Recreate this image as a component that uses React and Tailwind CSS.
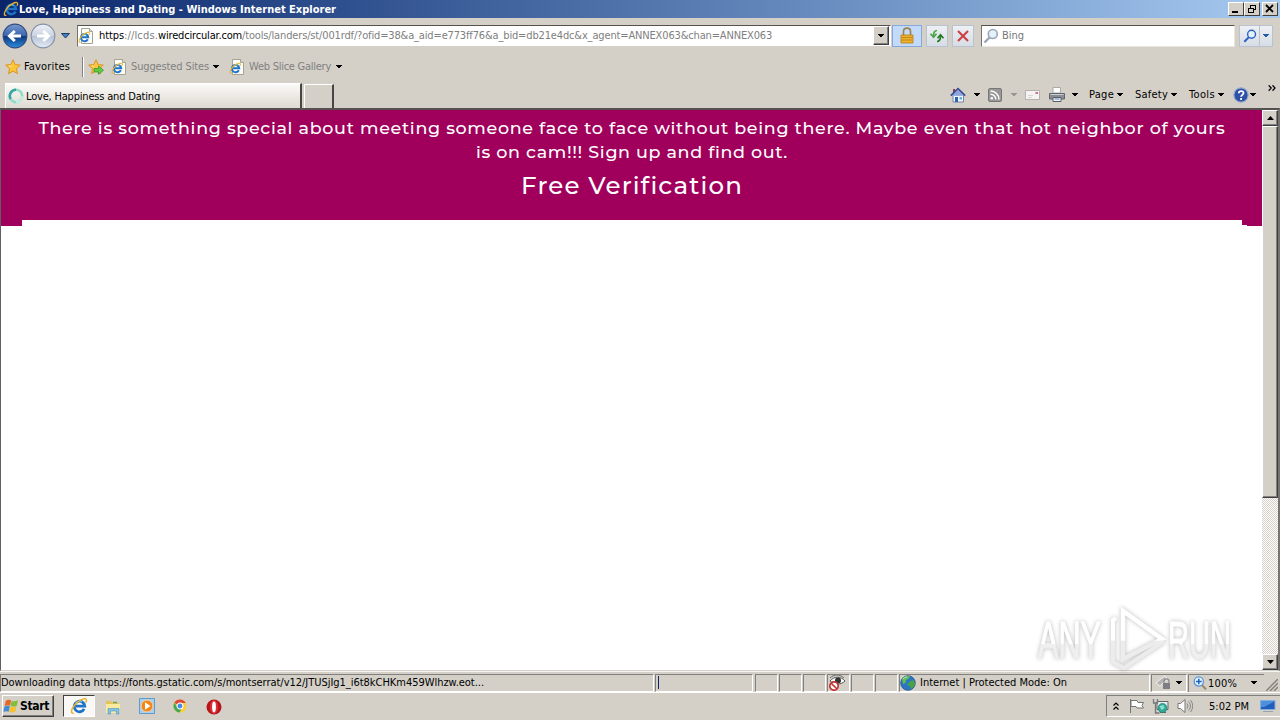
import React from 'react';

/**
 * Internet Explorer 8 window on a classic-theme Windows 7 desktop.
 */

// Spreads a label over a fixed width by adjusting the letter spacing.
function Fit({ width, className = '', children }) {
  const ref = React.useRef(null);
  React.useLayoutEffect(() => {
    const el = ref.current;
    el.style.letterSpacing = '0px';
    const natural = el.getBoundingClientRect().width;
    const count = el.textContent.length;
    el.style.letterSpacing = `${(width - natural) / count}px`;
  }, [width, children]);
  return <span ref={ref} className={`inline-block shrink-0 whitespace-nowrap ${className}`}>{children}</span>;
}

function Caret({ className = '' }) {
  return (
    <svg viewBox="0 0 6 4" className={`w-[6px] h-[4px] shrink-0 ${className}`} shapeRendering="crispEdges">
      <path d="M0 0h6L3 3.5z" fill="currentColor" />
    </svg>
  );
}

function IeGlyph() {
  return (
    <g fill="none">
      <path d="M12.6 10.6a4.7 4.7 0 1 1 .5-2.5H5.2" stroke="#1e72c8" strokeWidth="2.5" />
      <path d="M5 5.2a4.6 4.6 0 0 1 5.6-1" stroke="#7cc6f4" strokeWidth="1" />
      <path d="M3.400 14.300c-3 .8-2.600-2.600.2-6.500C6.600 3.700 12 .8 14 1.700c1.100.6.7 2-.2 3.200" stroke="#e8b42c" strokeWidth="1.300" />
    </g>
  );
}

function IeIcon({ className = 'size-4' }) {
  return <svg viewBox="0 0 16 16" className={`shrink-0 ${className}`}><IeGlyph /></svg>;
}

function IePage() {
  return (
    <svg viewBox="0 0 16 16" className="size-4 shrink-0">
      <path d="M3.500.5h8l3 3v12h-11z" fill="#fdfdf8" stroke="#a5a296" />
      <path d="M11.500.5v3h3" fill="#dcd9cc" stroke="#a5a296" />
      <g transform="translate(0 3) scale(.78)"><IeGlyph /></g>
    </svg>
  );
}

function Star({ add }) {
  return (
    <svg viewBox="0 0 16 16" className="size-4 shrink-0">
      <path d="M8 .8l2.100 4.800 5.200.5-3.900 3.500 1.100 5.100L8 12l-4.500 2.700 1.100-5.100L.7 6.100l5.200-.5z" fill="#fcc63c" stroke="#d98d1c" strokeWidth=".9" />
      <path d="M8 2.800L6.600 6.500 2.800 6.900l3 .8z" fill="#fff1a8" />
      {add && <path d="M6 9.500h4.500V7l5 4.200-5 4.200v-2.500H6z" fill="#62c943" stroke="#3b9a2c" strokeWidth=".8" />}
    </svg>
  );
}

function NavCircle({ forward }) {
  const arrow = forward ? 'M7 13h11M13.200 8l5.300 5-5.300 5' : 'M19 13H8M12.800 8l-5.300 5 5.300 5';
  return (
    <svg viewBox="0 0 26 26" className="size-[26px] shrink-0">
      <defs>
        <linearGradient id={forward ? 'fwd' : 'back'} x1="0" y1="0" x2="0" y2="1">
          <stop offset="0" stopColor={forward ? '#eef1f8' : '#7898d0'} />
          <stop offset=".48" stopColor={forward ? '#ccd4e2' : '#3a65ae'} />
          <stop offset=".52" stopColor={forward ? '#b7c3d7' : '#0d377f'} />
          <stop offset="1" stopColor={forward ? '#e5ebf5' : '#2b8fe0'} />
        </linearGradient>
      </defs>
      <circle cx="13" cy="13" r="11.800" fill={forward ? 'url(#fwd)' : 'url(#back)'} stroke={forward ? '#8590a8' : '#304b7c'} strokeWidth="1.200" />
      <path d={arrow} fill="none" stroke="#fff" strokeWidth="3" />
    </svg>
  );
}

function Magnifier({ color, className }) {
  return (
    <svg viewBox="0 0 16 16" className={`shrink-0 ${className}`}>
      <path d="M7 9l-5.500 5.500" stroke={color} strokeWidth="2.400" />
      <circle cx="9.800" cy="6" r="4.500" fill="#e4f1fb" stroke={color} strokeWidth="1.600" />
    </svg>
  );
}

function CaptionButton({ children, className = '' }) {
  return (
    <div className={`w-4 h-[14px] shrink-0 bg-[#d4d0c8] border border-t-white border-l-white border-r-[#404040] border-b-[#404040] ${className}`}>
      <svg viewBox="0 0 14 12" className="w-[14px] h-3" fill="none" stroke="#000" shapeRendering="crispEdges">{children}</svg>
    </div>
  );
}

function TitleBar() {
  return (
    <div className="h-[18px] shrink-0 flex items-center bg-linear-to-r from-[#0a246a] to-[#a6caf0] text-white">
      <IeIcon className="size-4 ml-[3px]" />
      <Fit width={317} className="font-bold pt-px">Love, Happiness and Dating - Windows Internet Explorer</Fit>
      <div className="flex ml-auto mr-[2px]">
        <CaptionButton><path d="M3 9h6" strokeWidth="2" /></CaptionButton>
        <CaptionButton>
          <path d="M5 2h6M5.500 2v3M10.500 2v5M9 6.500h2" />
          <path d="M3 5h6M3.500 5v5M8.500 5v5M3 9.500h6" />
        </CaptionButton>
        <CaptionButton className="ml-[2px]"><path d="M3 2l7 7M10 2L3 9" strokeWidth="1.800" shapeRendering="auto" /></CaptionButton>
      </div>
    </div>
  );
}

function ToolButton({ className, children }) {
  return (
    <div className={`h-[22px] shrink-0 flex items-center justify-center border border-[#bac2cf] bg-linear-to-b from-[#edf0f4] to-[#d7dde6] ${className}`}>
      {children}
    </div>
  );
}

function AddressRow() {
  return (
    <div className="h-[34px] pt-px flex items-center pl-[2px]">
      <NavCircle />
      <div className="ml-[2px]"><NavCircle forward /></div>
      <svg viewBox="0 0 9 6" className="w-[9px] h-[6px] ml-[5px]"><path d="M.5.5h8L4.500 5z" fill="#467fc0" stroke="#173c6c" /></svg>
      <div className="w-[814px] h-[22px] ml-[7px] flex items-center bg-white border border-t-[#55524e] border-l-[#77746e] border-r-white border-b-[#d4d0c8]">
        <div className="flex"><IePage /></div>
        <div className="flex ml-[5px] pt-px text-[#808080]">
          <Fit width={25} className="text-black">https</Fit>
          <Fit width={34}>://lcds.</Fit>
          <Fit width={84} className="text-black">wiredcircular.com</Fit>
          <Fit width={530}>/tools/landers/st/001rdf/?ofid=38&amp;a_aid=e773ff76&amp;a_bid=db21e4dc&amp;x_agent=ANNEX063&amp;chan=ANNEX063</Fit>
        </div>
        <div className="ml-auto mr-px w-4 h-[19px] flex items-center justify-center bg-[#d4d0c8] border border-t-white border-l-white border-r-[#404040] border-b-[#404040] shadow-[inset_-1px_-1px_#808080]">
          <Caret />
        </div>
      </div>
      <div className="w-[30px] h-[22px] ml-px flex items-center justify-center border border-[#84a9dd] bg-[#c4dafa]">
        <svg viewBox="0 0 16 18" className="w-4 h-[18px]">
          <path d="M4.500 8V4.500C4.500 0 11.500 0 11.500 4.500V8" fill="none" stroke="#9b8450" strokeWidth="1.700" />
          <path d="M2 8h12v8H2z" fill="#eeb02e" stroke="#b57b14" strokeWidth=".8" />
          <path d="M2.500 10.500h11M2.500 13h11" stroke="#c48818" />
        </svg>
      </div>
      <ToolButton className="w-[22px] ml-[4px]">
        <svg viewBox="0 0 16 14" className="w-4 h-[14px]" fill="none" strokeWidth="1.700">
          <path d="M8 1.500C5 1.500 4.500 4 4.500 7M1.500 4.800l3 3.400 3-3.400" stroke="#49a545" />
          <path d="M8 12.500c3 0 3.500-2.500 3.500-5.500M8.500 9.200l3-3.400 3 3.400" stroke="#247b25" />
        </svg>
      </ToolButton>
      <ToolButton className="w-[22px] ml-1">
        <svg viewBox="0 0 12 12" className="size-3"><path d="M1 1l10 10M11 1L1 11" stroke="#cc4545" strokeWidth="2.200" /></svg>
      </ToolButton>
      <div className="w-[254px] h-[22px] ml-[7px] flex items-center bg-white border border-t-[#55524e] border-l-[#77746e] border-r-[#e8e6e0] border-b-[#e8e6e0]">
        <Magnifier color="#9aa6b5" className="size-4 ml-px" />
        <Fit width={22} className="ml-[3px] pt-px text-[#777]">Bing</Fit>
      </div>
      <ToolButton className="w-[21px] ml-1"><Magnifier color="#2a62c4" className="size-[14px]" /></ToolButton>
      <ToolButton className="w-[14px] -ml-px text-[#245aa8]"><Caret /></ToolButton>
    </div>
  );
}

function FavoritesRow() {
  return (
    <div className="h-[29px] flex items-center pl-[5px]">
      <Star />
      <Fit width={46} className="ml-[3px]">Favorites</Fit>
      <div className="w-[2px] h-[20px] ml-3 bg-[#808080] border-r border-white" />
      <div className="ml-1 flex"><Star add /></div>
      <div className="ml-[7px] flex"><IePage /></div>
      <Fit width={78} className="ml-1 pt-px text-[#808080]">Suggested Sites</Fit>
      <Caret className="ml-1 mt-px" />
      <div className="ml-[10px] flex"><IePage /></div>
      <Fit width={82} className="ml-[4px] pt-px text-[#808080]">Web Slice Gallery</Fit>
      <Caret className="ml-[5px] mt-px" />
    </div>
  );
}

function TabRow() {
  return (
    <div className="h-[27px] flex items-end">
      <div className="w-[297px] h-[25px] ml-[5px] flex items-center bg-linear-to-b from-[#fbfaf8] to-[#dedad2] border-t border-l border-t-white border-l-white border-r-2 border-r-[#484642]">
        <svg viewBox="0 0 16 16" className="size-4 ml-[2px]" fill="none" strokeWidth="2.600">
          <circle cx="8" cy="8" r="6.200" stroke="#8edcc8" />
          <path d="M8 1.800A6.200 6.200 0 0 0 2.600 11" stroke="#3aa5a0" />
          <path d="M8 14.200A6.200 6.200 0 0 0 14 8" stroke="#c2ebe4" />
        </svg>
        <Fit width={134} className="ml-[2px] pt-px">Love, Happiness and Dating</Fit>
      </div>
      <div className="w-[30px] h-[24px] ml-[2px] border-t border-l border-t-white border-l-white border-r-2 border-r-[#484642] bg-[#d4d0c8]" />
      <div className="ml-[616px] h-[27px] flex items-center">
        <svg viewBox="0 0 16 16" className="size-4">
          <path d="M3 2h2v4H3z" fill="#963a4c" />
          <path d="M3 8h10.500v7H3z" fill="#f4f6fb" stroke="#7784ad" />
          <path d="M.8 8.600L8 1.500l7.200 7.100" fill="#8ea6dd" stroke="#344b91" strokeWidth="1.500" />
          <path d="M5 10h3v5H5z" fill="#2d64ad" /><path d="M9.500 10H12v2.500H9.500z" fill="#58b4dc" />
        </svg>
        <Caret className="ml-2" />
        <svg viewBox="0 0 14 14" className="size-[14px] ml-2">
          <rect x=".5" y=".5" width="13" height="13" rx="1.500" fill="#989898" stroke="#777" />
          <circle cx="3.800" cy="10.300" r="1.300" fill="#fff" />
          <path d="M2.500 6.200a5.200 5.200 0 0 1 5.300 5.300M2.500 3a8.500 8.500 0 0 1 8.500 8.500" fill="none" stroke="#fff" strokeWidth="1.500" />
        </svg>
        <Caret className="ml-[9px] text-[#989590]" />
        <svg viewBox="0 0 15 10" className="w-[15px] h-[10px] ml-2">
          <path d="M.5.5h14v9H.5z" fill="#f5f3f3" stroke="#b6b0b0" /><path d="M10.500 2H13v2h-2.500z" fill="#d0707e" /><path d="M3 5.500h5M3 7.500h4" stroke="#d8d3d6" />
        </svg>
        <svg viewBox="0 0 16 16" className="size-4 ml-[9px]">
          <path d="M4 .5h7.500V6H4z" fill="#fff" stroke="#aaa" />
          <path d="M.5 6.500h15V12H.5z" fill="#8a8e94" stroke="#62656b" />
          <path d="M1.500 7.500h13" stroke="#c9ccd1" />
          <path d="M4 10.500h8v4H4z" fill="#f0f6fb" stroke="#5a5e64" /><path d="M5.500 12h5" stroke="#4b86c4" />
        </svg>
        <Caret className="ml-[7px]" />
        <Fit width={25} className="ml-[11px]">Page</Fit><Caret className="ml-[3px]" />
        <Fit width={33} className="ml-3">Safety</Fit><Caret className="ml-[3px]" />
        <Fit width={26} className="ml-3">Tools</Fit><Caret className="ml-[3px]" />
        <svg viewBox="0 0 16 16" className="size-4 ml-[9px]">
          <circle cx="8" cy="8" r="7.200" fill="#2c51a6" stroke="#9caccf" strokeWidth="1.200" />
          <path d="M5.800 6.200C5.800 3.300 10.500 3.400 10.500 6c0 1.900-2.400 1.800-2.400 3.800M8.100 11v2" fill="none" stroke="#fff" strokeWidth="1.800" />
        </svg>
        <Caret className="ml-px" />
        <svg viewBox="0 0 8 6" className="w-2 h-[6px] ml-[12px] mb-[13px]" fill="none" stroke="#000" strokeWidth="1.300"><path d="M.7.3L3.200 3 .7 5.700M4.500.3L7 3 4.500 5.700" /></svg>
      </div>
    </div>
  );
}

function ScrollButton({ up }) {
  return (
    <div className="size-4 shrink-0 flex items-center justify-center bg-[#d4d0c8] border border-t-white border-l-white border-r-[#404040] border-b-[#404040] shadow-[inset_-1px_-1px_#808080]">
      <svg viewBox="0 0 7 4" className="w-[7px] h-1"><path d={up ? 'M0 4h7L3.500 0z' : 'M0 0h7L3.500 4z'} /></svg>
    </div>
  );
}

function Watermark() {
  return (
    <svg viewBox="0 0 212 68" className="absolute left-[1031px] top-[496px] w-[212px] h-[68px] drop-shadow-[0_0_2px_rgba(0,0,0,0.27)]">
      <defs>
        <linearGradient id="mark" x1="0" y1="0" x2="0" y2="1">
          <stop offset=".56" stopColor="#fff" />
          <stop offset=".58" stopColor="#efefef" />
        </linearGradient>
        <linearGradient id="play" gradientUnits="userSpaceOnUse" x1="0" y1="0" x2="0" y2="68">
          <stop offset=".5" stopColor="#fff" />
          <stop offset=".52" stopColor="#ececec" />
        </linearGradient>
      </defs>
      <g fill="url(#mark)" className="font-['Liberation_Sans'] text-[52px]">
        <text x="6" y="52" textLength="63" lengthAdjust="spacingAndGlyphs" stroke="url(#mark)" strokeWidth="1.200">ANY</text>
        <text x="136" y="52" textLength="63" lengthAdjust="spacingAndGlyphs" stroke="url(#mark)" strokeWidth="1.200">RUN</text>
      </g>
      <g fill="none" stroke="url(#play)" strokeWidth="4.500">
        <path d="M91 5v48l39-20z" />
        <path d="M84 12l-3 2v42l11 6 40-27" strokeWidth="4" />
      </g>
    </svg>
  );
}

function Page() {
  return (
    <div className="relative h-[563px] shrink-0 flex border-t-2 border-t-[#55504f] border-l border-l-[#606060] border-r-2 border-r-[#77736e] border-b border-b-[#d4d0c8] bg-white">
      <div className="w-[1261px] font-['Montserrat','Inter',sans-serif] text-white font-medium">
        <div className="h-[110px] pt-[6px] pl-px flex flex-col items-center bg-[#a0005c]">
          <Fit width={1187} className="text-[17.5px] leading-6">There is something special about meeting someone face to face without being there. Maybe even that hot neighbor of yours</Fit>
          <Fit width={312} className="text-[17.5px] leading-6">is on cam!!! Sign up and find out.</Fit>
          <Fit width={222} className="text-[24.5px] leading-[42px]">Free Verification</Fit>
        </div>
        <div className="h-[6px] flex justify-between">
          <div className="w-[21px] bg-[#a0005c]" />
          <div className="w-5 flex">
            <div className="w-[5px] h-[5px] bg-[#a0005c]" />
            <div className="grow bg-[#a0005c]" />
          </div>
        </div>
      </div>
      <div className="w-4 flex flex-col bg-[repeating-conic-gradient(#fff_0_25%,#d4d0c8_0_50%)] bg-size-[2px_2px]">
        <ScrollButton up />
        <div className="h-[372px] bg-[#d4d0c8] border border-t-white border-l-white border-r-[#404040] border-b-[#404040] shadow-[inset_-1px_-1px_#808080]" />
        <div className="mt-auto"><ScrollButton /></div>
      </div>
      <Watermark />
    </div>
  );
}

function Pane({ className, children }) {
  return (
    <div className={`h-[18px] shrink-0 flex items-center border border-t-[#808080] border-l-[#808080] border-r-white border-b-white ${className}`}>
      {children}
    </div>
  );
}

function StatusBar() {
  return (
    <div className="h-[22px] pt-px shrink-0 flex items-center border-t border-t-[#f6f4f0] border-b border-b-white">
      <Pane className="w-[654px]"><Fit width={483} className="pt-px">Downloading data https://fonts.gstatic.com/s/montserrat/v12/JTUSjIg1_i6t8kCHKm459Wlhzw.eot...</Fit></Pane>
      <Pane className="w-[98px] ml-px"><div className="w-px h-[13px] ml-[2px] bg-[#0a246a]" /></Pane>
      <Pane className="w-[23px] ml-[2px]" />
      <Pane className="w-[23px] ml-px" />
      <Pane className="w-[23px] ml-px" />
      <Pane className="w-[23px] ml-px">
        <svg viewBox="0 0 18 16" className="w-[18px] h-4 shrink-0">
          <path d="M2 6c4-5 11-5 15 0-4 4-10 4-15 0z" fill="#fff" stroke="#555" />
          <circle cx="10" cy="5.500" r="3" fill="#333" /><path d="M2 3c4-4 10-4 14 0" fill="none" stroke="#666" />
          <circle cx="6" cy="11" r="4.200" fill="#fff" stroke="#c43535" strokeWidth="1.700" /><path d="M3 8l6 6" stroke="#c43535" strokeWidth="1.700" />
        </svg>
      </Pane>
      <Pane className="w-[23px] ml-px" />
      <Pane className="w-[23px] ml-px" />
      <Pane className="w-[251px] ml-px">
        <svg viewBox="0 0 16 16" className="size-4">
          <circle cx="8" cy="8" r="7.300" fill="#2b75c5" stroke="#275387" strokeWidth=".8" />
          <path d="M2 4c2-3 6-3.500 8-2.500L8.500 4 6 5l-.5 3L3 9z" fill="#63bc55" /><path d="M9 7l4-2 2 3c0 3-2 5-4 6l-1-3-3-1z" fill="#48a443" />
          <path d="M3 4c1-1 2-2 4-2" stroke="#bde5f6" fill="none" />
        </svg>
        <Fit width={147} className="ml-1 pt-px">Internet | Protected Mode: On</Fit>
      </Pane>
      <Pane className="w-[36px] ml-px">
        <svg viewBox="0 0 17 15" className="w-[17px] h-[15px] ml-[3px]">
          <path d="M1 8l6-5 3-2 2 4-4 3-3 3z" fill="#b5b3b4" stroke="#f2f0ee" />
          <path d="M9 8V6.500c0-3.500 5-3.500 5 0V8" fill="none" stroke="#8e8c90" strokeWidth="1.300" /><path d="M8 8h7v6H8z" fill="#7e7d83" />
        </svg>
        <Caret className="ml-1" />
      </Pane>
      <div className="w-[76px] h-[18px] ml-px flex items-center border-t border-l border-[#808080]">
        <svg viewBox="0 0 14 14" className="size-[14px] ml-1">
          <path d="M8.500 8.500l4.500 5" stroke="#9b8a66" strokeWidth="2" /><circle cx="5.800" cy="5.500" r="4.600" fill="#e5f3fd" stroke="#5794dd" strokeWidth="1.300" />
          <path d="M3 5.500h5.600M5.800 2.700v5.600" stroke="#1e63bb" strokeWidth="1.500" />
        </svg>
        <Fit width={29} className="ml-px pt-px">100%</Fit>
        <Caret className="ml-[14px]" />
      </div>
      <svg viewBox="0 0 12 12" className="size-3 ml-[2px] mt-1" stroke="#84817b" strokeWidth="1.500"><path d="M0 12L12 0M4 12l8-8M8 12l4-4" /></svg>
    </div>
  );
}

function WindowsFlag() {
  return (
    <svg viewBox="0 0 16 16" className="size-4 shrink-0 -rotate-2">
      <path d="M3 2.500c2-1 3.500-1 5.300 0L7 7.700c-1.500-.8-3-.8-5.300 0z" fill="#e8652a" />
      <path d="M8.700 2.800c2 1 4 .8 6.500-.3L13.800 7.900c-2.100 1-4 1-6.200 0z" fill="#83be3b" />
      <path d="M1.500 8.300c2-.9 3.700-.8 5.300 0l-1.400 5.400c-1.500-.9-3.200-.9-5.200 0z" fill="#428ad3" />
      <path d="M7.300 8.600c2 .9 4 .9 6.200 0l-1.400 5.400c-2 1-4 .9-6.100-.2z" fill="#f5c132" />
    </svg>
  );
}

function Taskbar() {
  return (
    <div className="h-[26px] shrink-0 flex items-center">
      <div className="w-[52px] h-[22px] ml-[2px] flex items-center border border-t-white border-l-white border-r-[#404040] border-b-[#404040] shadow-[inset_-1px_-1px_#808080]">
        <WindowsFlag />
        <Fit width={29} className="ml-px font-bold text-[12px]">Start</Fit>
      </div>
      <div className="w-[32px] h-[22px] ml-[9px] flex items-center justify-center bg-[#f9f8f6] border border-t-[#404040] border-l-[#404040] border-r-white border-b-white">
        <IeIcon className="size-[18px]" />
      </div>
      <svg viewBox="0 0 16 16" className="size-4 ml-[10px] mt-[2px]">
        <path d="M1 2h5l1 1.500h7V14H1z" fill="#e6c35a" /><path d="M1 5h14v9H1z" fill="#fbea9e" />
        <path d="M3 15V9.500h11V15h-2.500v-3H5.500v3z" fill="#7fc3ea" stroke="#4a94c4" strokeWidth=".6" /><path d="M8 3.500h4" stroke="#69a956" strokeWidth="1.500" />
      </svg>
      <svg viewBox="0 0 16 16" className="size-4 ml-[18px]">
        <path d="M.5.5h15v15H.5z" fill="#acd0ec" stroke="#5c9bce" /><circle cx="8" cy="8" r="5.800" fill="#f28518" stroke="#fcc586" /><path d="M6 4.300L11.500 8 6 11.700z" fill="#fff" />
      </svg>
      <svg viewBox="0 0 16 16" className="size-[14px] ml-[18px]">
        <circle cx="8" cy="8" r="7.500" fill="#fbd036" /><path d="M8 8L1.500 4.300A7.500 7.500 0 0 1 14.600 4.500H8z" fill="#df4938" />
        <path d="M1.500 4.300A7.500 7.500 0 0 0 7.500 15.500L10.500 10 5 9.500z" fill="#45a853" /><circle cx="8" cy="8" r="3.400" fill="#4789ed" stroke="#fff" strokeWidth="1.200" />
      </svg>
      <svg viewBox="0 0 16 16" className="size-4 ml-[19px] mt-[2px]">
        <circle cx="8" cy="8" r="7.500" fill="#b9131b" /><ellipse cx="8" cy="8" rx="4" ry="6.700" fill="#d83236" /><ellipse cx="8" cy="8" rx="1.900" ry="5.400" fill="#fff" />
      </svg>
      <div className="ml-auto w-[174px] h-[22px] flex items-center border border-t-[#808080] border-l-[#808080] border-r-0 border-b-white">
        <svg viewBox="0 0 6 8" className="w-[6px] h-2 ml-[6px]" fill="none" stroke="#000" strokeWidth="1.200"><path d="M.5 3.500L3 1l2.500 2.500M.5 7.500L3 5l2.500 2.500" /></svg>
        <svg viewBox="0 0 16 16" className="size-4 ml-[10px]" fill="#fff" stroke="#747474"><path d="M1.500 1v14M2 2.500h6l1 2h5.500L13 7.500l1.500 2.500H8L7 8.500H2z" /></svg>
        <svg viewBox="0 0 17 16" className="w-[17px] h-4 ml-[7px]">
          <path d="M5 3.500h11v8H5zM8 14.500h6" fill="#e8eef0" stroke="#666" /><path d="M1.500 1v4h4V1M3.500 5v10h4" fill="none" stroke="#777" strokeWidth="1.300" />
          <circle cx="10.500" cy="10" r="4.500" fill="#32aa9a" stroke="#227d77" strokeWidth=".7" /><path d="M7.500 8l4-1 1 3-3 2z" fill="#8edfc9" />
        </svg>
        <svg viewBox="0 0 16 16" className="size-4 ml-[8px]" fill="none" stroke="#888">
          <path d="M1 5.500h2.500L8 1.500v13l-4.500-4H1z" fill="#fff" stroke="#777" /><path d="M10 5.500q2 2.500 0 5M11.500 3.500q4 4.500 0 9M13.500 2q4.500 6 0 12" />
        </svg>
        <Fit width={40} className="ml-4 pt-px">5:02 PM</Fit>
        <svg viewBox="0 0 16 14" className="w-4 h-[14px] ml-[11px]">
          <path d="M.5 1.500h14.500v9H.5z" fill="#225fbd" stroke="#84afd9" /><path d="M1 2h14L4 8H1z" fill="#4f90dc" /><path d="M3 12.500h10" stroke="#99a5b5" />
        </svg>
      </div>
    </div>
  );
}

export default function App() {
  return (
    <div className="w-[1280px] h-[720px] overflow-hidden flex flex-col bg-[#d4d0c8] font-['DejaVu_Sans_Condensed','DejaVu_Sans',sans-serif] text-[11px] leading-[14px] text-black">
      <TitleBar />
      <div className="h-[90px] shrink-0 flex flex-col">
        <AddressRow />
        <FavoritesRow />
        <TabRow />
      </div>
      <Page />
      <StatusBar />
      <Taskbar />
    </div>
  );
}
